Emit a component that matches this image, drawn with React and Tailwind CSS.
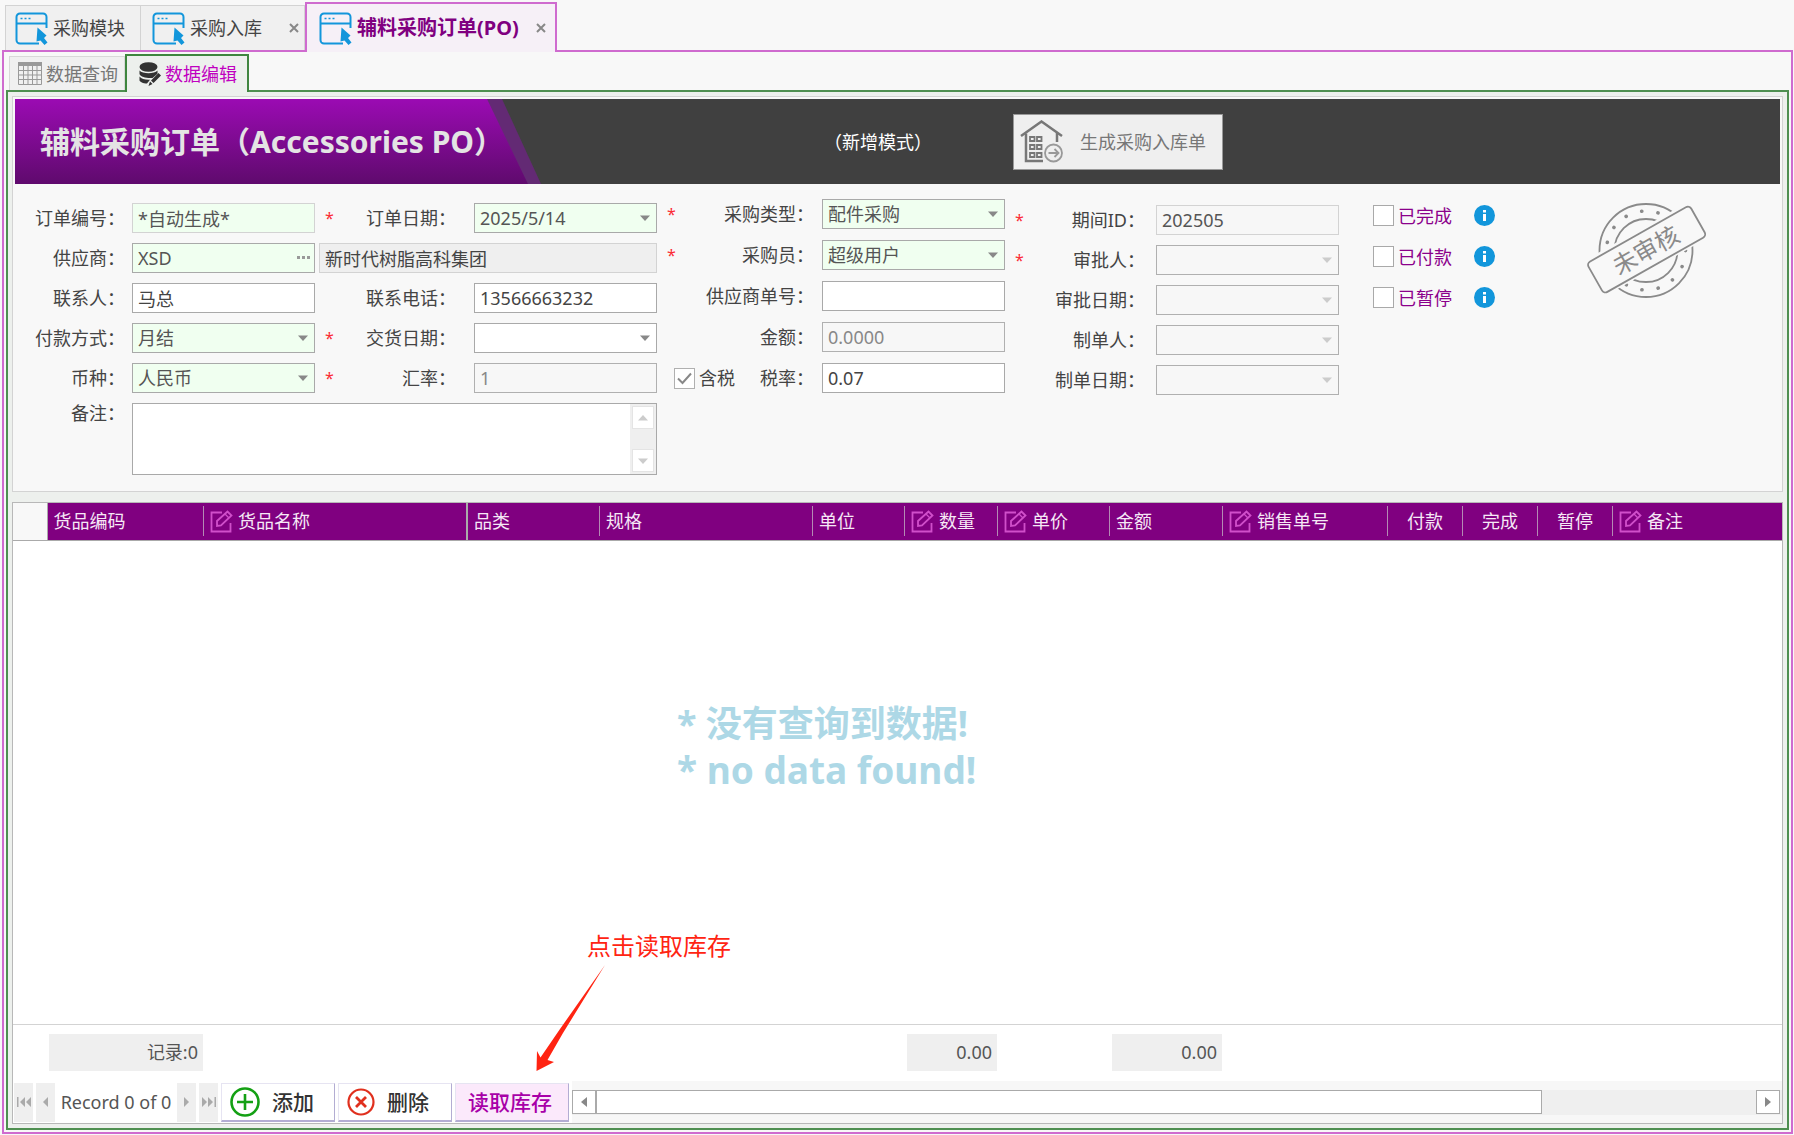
import { useState } from "react";

const columns = [
  { title: "货品编码", width: "w-[157px]" },
  { title: "货品名称", width: "w-[263px]", edit: true, fixed: true },
  { title: "品类", width: "w-[133px]" },
  { title: "规格", width: "w-[213px]" },
  { title: "单位", width: "w-[92px]" },
  { title: "数量", width: "w-[93px]", edit: true, total: "0.00" },
  { title: "单价", width: "w-[112px]", edit: true },
  { title: "金额", width: "w-[113px]", total: "0.00" },
  { title: "销售单号", width: "w-[165px]", edit: true },
  { title: "付款", width: "w-[75px]", center: true },
  { title: "完成", width: "w-[75px]", center: true },
  { title: "暂停", width: "w-[75px]", center: true },
  { title: "备注", width: "", edit: true },
];

const tones = {
  required: "bg-[#f0fff0] border-[#a9a9a9] text-[#555]",
  auto: "bg-[#f0fff0] border-[#d3d3d3] text-[#555]",
  normal: "bg-white border-[#a9a9a9] text-[#444]",
  disabled: "bg-[#f7f7f7] border-[#b0b0b0] text-[#888]",
  readonly: "bg-[#f7f7f7] border-[#d3d3d3] text-[#555]",
  gray: "bg-[#efefef] border-[#d3d3d3] text-[#444]",
};

/* ---------- icons ---------- */

function WindowIcon() {
  return (
    <svg className="w-[33px] h-[33px] shrink-0" viewBox="0 0 33 33" fill="none" stroke="#1296db" strokeWidth="2">
      <path d="M24 31.500H5A3.500 3.500 0 0 1 1.500 28V5A3.500 3.500 0 0 1 5 1.500h23A3.500 3.500 0 0 1 31.500 5v11" />
      <path d="M1.500 11.500h30" />
      <path d="M5.500 6.500h2M9.500 6.500h2M13.500 6.500h2" strokeWidth="1.600" />
      <path d="M22.500 15.500l9 8-2.500 2.500 3.500 4.500-3 2.500-4-4.500-4 1z" fill="#1296db" stroke="none" />
    </svg>
  );
}

function SheetIcon() {
  return (
    <svg className="w-6 h-[23px] shrink-0" viewBox="0 0 24 23" fill="none" stroke="#999">
      <path d="M0 0h24v4H0z" fill="#999" stroke="none" />
      <path d="M.5 .5h23v22H.5zM5.500 4v18M10 4v18M14.500 4v18M19 4v18M0 8.500h24M0 13h24M0 17.500h24" />
    </svg>
  );
}

function DatabaseIcon() {
  return (
    <svg className="w-[22px] h-6 shrink-0" viewBox="0 0 22 24" fill="#333">
      <ellipse cx="9.500" cy="5" rx="9" ry="4.800" />
      <path d="M.5 8.500c3 3.500 15 3.500 18 0v3.200l-5 4.300C8 16.500 1.500 15 .5 12z" />
      <path d="M.5 14.500c2 2.500 6 3.500 10.500 3.200l-3 3.800C4 21.500 1 20 .5 18.500z" />
      <path d="M19.500 11l2.500 2.500-7.500 7.500-2.500-2.500zM11 19.500l2.500 2.500-4 2z" />
    </svg>
  );
}

function HouseIcon() {
  return (
    <svg className="w-[43px] h-[43px] shrink-0" viewBox="0 0 43 43" fill="none" stroke="#777" strokeWidth="1.800">
      <path d="M1 16L21.500 1.500 42 16" strokeWidth="2.500" />
      <path d="M6 13.500V41h17" strokeWidth="2.500" />
      <path d="M37 13v9" strokeWidth="2.500" />
      <path d="M10 17h4.500v4H10zM17 17h4.500v4H17zM10 25h4.500v4H10zM17 25h4.500v4H17zM10 33h4.500v4H10zM17 33h4.500v4H17z" />
      <circle cx="33.500" cy="33" r="8.500" stroke="#999" />
      <path d="M28.500 33h9M34.500 29l4 4-4 4" stroke="#999" />
    </svg>
  );
}

function EditIcon() {
  return (
    <svg className="w-[23px] h-[23px] shrink-0" viewBox="0 0 23 23" fill="none" stroke="#d04fca" strokeWidth="1.800">
      <path d="M12 2.500H1.500v19h19V13" />
      <path d="M7 16v-5L17.500 1.500l4 4L11 15.500z" />
      <path d="M15 4l4 4" strokeWidth="1.200" />
    </svg>
  );
}

function Stamp() {
  return (
    <svg className="w-[122px] h-[96px]" viewBox="0 0 122 96" fill="none" stroke="#8a8a8a" strokeWidth="1.800">
      <circle cx="60" cy="47.500" r="46.500" />
      <circle cx="60" cy="47.500" r="31.500" />
      <circle cx="60" cy="47.500" r="39.500" strokeWidth="3.600" strokeLinecap="round" strokeDasharray="0.1 16.400" />
      <g transform="rotate(-29.500 60 47.500)">
        <path d="M0 26h122v41H0z" fill="#f8f8f8" stroke="none" />
        <rect x="2" y="29.500" width="118" height="35" rx="4" fill="#f8f8f8" />
        <text x="60" y="56" textAnchor="middle" fontSize="24" fill="#8a8a8a" stroke="none">
          未审核
        </text>
      </g>
    </svg>
  );
}

function InfoIcon() {
  return (
    <svg className="w-[21px] h-[21px]" viewBox="0 0 21 21">
      <circle cx="10.500" cy="10.500" r="10.500" fill="#1296db" />
      <path d="M9 5h3v2.500H9zM9 9h3v7H9z" fill="#fff" />
    </svg>
  );
}

function CloseIcon() {
  return (
    <svg className="h-[10px] w-[10px]" viewBox="0 0 10 10" stroke="#888" strokeWidth="2">
      <path d="M1 1l8 8M9 1L1 9" />
    </svg>
  );
}

function Triangle({ dir = "down", className = "" }) {
  const d = {
    down: "M0 2.500h10L5 8z",
    up: "M0 7.500h10L5 2z",
    left: "M8 0v10L2 5z",
    right: "M2 0v10l6-5z",
  };
  return (
    <svg className={`w-[10px] h-[10px] ${className}`} viewBox="0 0 10 10" fill="currentColor">
      <path d={d[dir]} />
    </svg>
  );
}

/* ---------- form parts ---------- */

// The star marks the field on the left of the label
function LabelCell({ htmlFor, children, star, className = "" }) {
  return (
    <div className={`flex items-center pl-[10px] ${className}`}>
      {star && <span className="text-base text-red-500">*</span>}
      <label htmlFor={htmlFor} className="ml-auto whitespace-nowrap">
        {children}：
      </label>
    </div>
  );
}

function TextBox({ id, tone = "normal", className = "", ...props }) {
  return (
    <input
      id={id}
      type="text"
      className={`h-[30px] w-full min-w-0 border px-[5px] outline-none ${tones[tone]} ${className}`}
      {...props}
    />
  );
}

function Combo({ id, value, tone = "required", disabled }) {
  return (
    <div className="relative">
      <select
        id={id}
        disabled={disabled}
        defaultValue={value}
        className={`h-[30px] w-full appearance-none border px-[5px] opacity-100 outline-none ${tones[tone]}`}
      >
        <option value={value}>{value}</option>
      </select>
      <Triangle
        className={`pointer-events-none absolute right-[7px] top-[10px] ${disabled ? "text-[#ccc]" : "text-[#888]"}`}
      />
    </div>
  );
}

function DateBox({ id, value = "", tone = "normal", disabled }) {
  return (
    <div className="relative">
      <TextBox id={id} tone={tone} defaultValue={value} disabled={disabled} />
      <button
        type="button"
        aria-label="选择日期"
        disabled={disabled}
        className={`absolute right-[7px] top-[10px] ${disabled ? "text-[#ccc]" : "text-[#888]"}`}
      >
        <Triangle />
      </button>
    </div>
  );
}

function StatusCheck({ id, children }) {
  return (
    <div className="flex h-[21px] items-center">
      <input id={id} type="checkbox" className="h-[21px] w-[21px] appearance-none border border-[#a9a9a9] bg-white checked:bg-[#8b008b]" />
      <label htmlFor={id} className="w-[80px] pl-1 text-[#8b008b]">
        {children}
      </label>
      <InfoIcon />
    </div>
  );
}

function OrderForm() {
  return (
    <form className="flex items-start pb-[14px] pt-[15px] text-[#444]">
      <div className="mt-1 grid grid-cols-[117px_183px_159px_183px] gap-y-[10px]">
        <LabelCell htmlFor="no" className="pr-[7px]">订单编号</LabelCell>
        <TextBox id="no" tone="auto" defaultValue="*自动生成*" readOnly />
        <LabelCell htmlFor="date" star className="pr-[18px]">订单日期</LabelCell>
        <DateBox id="date" tone="required" value="2025/5/14" />

        <LabelCell htmlFor="supplier" className="pr-[7px]">供应商</LabelCell>
        <div className="relative">
          <TextBox id="supplier" tone="required" defaultValue="XSD" />
          <button type="button" aria-label="选择供应商" className="absolute right-[5px] top-[13px] flex gap-[2px]">
            <i className="h-[3px] w-[3px] bg-[#999]" />
            <i className="h-[3px] w-[3px] bg-[#999]" />
            <i className="h-[3px] w-[3px] bg-[#999]" />
          </button>
        </div>
        <div className="col-span-2 pl-1">
          <TextBox tone="gray" aria-label="供应商名称" defaultValue="新时代树脂高科集团" readOnly />
        </div>

        <LabelCell htmlFor="contact" className="pr-[7px]">联系人</LabelCell>
        <TextBox id="contact" defaultValue="马总" />
        <LabelCell htmlFor="phone" className="pr-[18px]">联系电话</LabelCell>
        <TextBox id="phone" defaultValue="13566663232" />

        <LabelCell htmlFor="pay" className="pr-[7px]">付款方式</LabelCell>
        <Combo id="pay" value="月结" />
        <LabelCell htmlFor="delivery" star className="pr-[18px]">交货日期</LabelCell>
        <DateBox id="delivery" />

        <LabelCell htmlFor="currency" className="pr-[7px]">币种</LabelCell>
        <Combo id="currency" value="人民币" />
        <LabelCell htmlFor="rate" star className="pr-[18px]">汇率</LabelCell>
        <TextBox id="rate" tone="disabled" defaultValue="1" disabled />

        <LabelCell htmlFor="remark" className="h-5 pr-[7px]">备注</LabelCell>
        <div className="col-span-3 flex h-[72px] border border-[#a9a9a9] bg-white">
          <textarea id="remark" className="flex-1 resize-none px-[5px] outline-none" />
          <div className="flex w-[26px] flex-col justify-between bg-[#efefef] p-[2px] text-[#ccc]">
            <button type="button" aria-label="向上" className="flex h-[23px] items-center justify-center border border-[#e4e4e4] bg-white">
              <Triangle dir="up" />
            </button>
            <button type="button" aria-label="向下" className="flex h-[23px] items-center justify-center border border-[#e4e4e4] bg-white">
              <Triangle />
            </button>
          </div>
        </div>
      </div>

      <div className="grid grid-cols-[165px_183px] gap-y-[11px]">
        <LabelCell htmlFor="type" star className="pr-[8px]">采购类型</LabelCell>
        <Combo id="type" value="配件采购" />
        <LabelCell htmlFor="buyer" star className="pr-[8px]">采购员</LabelCell>
        <Combo id="buyer" value="超级用户" />
        <LabelCell htmlFor="supplierNo" className="pr-[8px]">供应商单号</LabelCell>
        <TextBox id="supplierNo" />
        <LabelCell htmlFor="amount" className="pr-[8px]">金额</LabelCell>
        <TextBox id="amount" tone="disabled" defaultValue="0.0000" disabled />
        <div className="flex items-center pl-[17px] pr-[8px]">
          <span className="relative h-[21px]">
            <input
              id="tax"
              type="checkbox"
              defaultChecked
              className="peer block h-[21px] w-[21px] appearance-none border border-[#b0b0b0] bg-white"
            />
            <svg
              className="pointer-events-none absolute left-[3px] top-[4px] hidden h-[13px] w-[15px] peer-checked:block"
              viewBox="0 0 15 13"
              fill="none"
              stroke="#888"
              strokeWidth="2"
            >
              <path d="M1 6.500l4.500 4.500L14 1.500" />
            </svg>
          </span>
          <label htmlFor="tax" className="pl-1">含税</label>
          <label htmlFor="taxRate" className="ml-auto whitespace-nowrap">税率：</label>
        </div>
        <TextBox id="taxRate" defaultValue="0.07" />
      </div>

      <div className="mt-[6px] grid grid-cols-[151px_183px] gap-y-[10px]">
        <LabelCell htmlFor="period" star className="pr-[11px]">期间ID</LabelCell>
        <TextBox id="period" tone="readonly" defaultValue="202505" readOnly />
        <LabelCell htmlFor="auditor" star className="pr-[11px]">审批人</LabelCell>
        <Combo id="auditor" value="" tone="disabled" disabled />
        <LabelCell htmlFor="auditDate" className="pr-[11px]">审批日期</LabelCell>
        <DateBox id="auditDate" tone="disabled" disabled />
        <LabelCell htmlFor="maker" className="pr-[11px]">制单人</LabelCell>
        <Combo id="maker" value="" tone="disabled" disabled />
        <LabelCell htmlFor="makeDate" className="pr-[11px]">制单日期</LabelCell>
        <DateBox id="makeDate" tone="disabled" disabled />
      </div>

      <div className="ml-[34px] mt-[6px] flex flex-col gap-5">
        <StatusCheck id="done">已完成</StatusCheck>
        <StatusCheck id="paid">已付款</StatusCheck>
        <StatusCheck id="paused">已暂停</StatusCheck>
      </div>

      <div className="ml-auto mr-[72px] mt-1">
        <Stamp />
      </div>
    </form>
  );
}

function Banner() {
  return (
    <header className="relative flex h-[85px] items-center bg-[#404040] text-white">
      <svg className="absolute left-0 top-0 h-[85px] w-[530px]" viewBox="0 0 530 85">
        <defs>
          <linearGradient id="purple" x1="0" y1="0" x2="0" y2="1">
            <stop offset="0" stopColor="#9b0bb3" />
            <stop offset="1" stopColor="#5f0a6d" />
          </linearGradient>
        </defs>
        <path d="M470 0h17l39 85h-20z" fill="#632a74" />
        <path d="M0 0h472l41 85H0z" fill="url(#purple)" />
      </svg>
      <h1 className="relative w-[809px] whitespace-nowrap pl-[25px] text-[30px] font-bold leading-10 text-[#e4e4e4]">
        辅料采购订单（Accessories PO）
      </h1>
      <span>（新增模式）</span>
      <button
        type="button"
        className="ml-[81px] flex h-14 w-[210px] items-center border border-[#999] bg-[#efefef] pl-[6px] text-[#777]"
      >
        <HouseIcon />
        <span className="pl-[17px]">生成采购入库单</span>
      </button>
    </header>
  );
}

/* ---------- detail grid ---------- */

function DetailTable() {
  return (
    <table className="w-full flex-1 table-fixed border-collapse bg-white">
      <thead>
        <tr className="h-[37px] border-b border-[#aaa] bg-[#800080] text-[#f6e8f6]">
          <th className="w-[34px] border-r border-[#aaa] bg-[#f8f8f8]" aria-label="行" />
          {columns.map((col, i) => (
            <th key={col.title} className={`p-0 font-normal ${col.width} ${col.fixed ? "border-r-2 border-[#aaa]" : ""}`}>
              <div
                className={`flex h-[30px] items-center gap-[5px] ${col.center ? "justify-center" : "pl-[6px]"} ${
                  col.fixed || i === columns.length - 1 ? "" : "border-r border-[#b48ab4]"
                }`}
              >
                {col.edit && <EditIcon />}
                {col.title}
              </div>
            </th>
          ))}
        </tr>
      </thead>
      <tbody>
        <tr>
          <td colSpan={columns.length + 1} className="p-0 align-top">
            <div className="pl-[664px] pt-[160px] text-4xl font-bold leading-[46px] text-[#add8e6]">
              <p>* 没有查询到数据!</p>
              <p className="text-[37px]">* no data found!</p>
            </div>
          </td>
        </tr>
      </tbody>
      <tfoot>
        <tr className="h-[57px] border-t border-[#d3d3d3] text-[#555]">
          <td />
          {columns.map((col, i) => (
            <td key={col.title} className="py-0 pl-[2px] pr-px">
              {i === 0 && <div className="bg-[#efefef] pr-[5px] text-right leading-[37px]">记录:0</div>}
              {col.total && <div className="bg-[#efefef] pr-[5px] text-right leading-[37px]">{col.total}</div>}
            </td>
          ))}
        </tr>
      </tfoot>
    </table>
  );
}

function NavButton({ label, children }) {
  return (
    <button type="button" aria-label={label} className="flex h-[39px] w-[19px] items-center justify-center bg-[#efefef] text-[#aaa]">
      {children}
    </button>
  );
}

function ToolButton({ children, className = "bg-white text-[#333]" }) {
  return (
    <button
      type="button"
      className={`mr-[3px] flex h-[39px] w-[114px] items-center border border-b-2 border-[#e6e4f2] border-b-[#b3add3] border-r-[#b3add3] text-[21px] font-medium ${className}`}
    >
      {children}
    </button>
  );
}

function Pager() {
  return (
    <div className="flex h-[42px] items-center bg-[#f7f7f7]">
      <div className="flex h-full items-center gap-[3px] bg-white pl-px">
        <NavButton label="第一条">
          <svg className="h-[10px] w-[14px]" viewBox="0 0 14 10" fill="currentColor">
            <path d="M0 0h1.500v10H0zM8 0v10L3 5zM14 0v10L9 5z" />
          </svg>
        </NavButton>
        <NavButton label="上一条">
          <svg className="h-[10px] w-[5px]" viewBox="0 0 5 10" fill="currentColor">
            <path d="M5 0v10L0 5z" />
          </svg>
        </NavButton>
        <span className="w-[116px] text-center text-[#555]">Record 0 of 0</span>
        <NavButton label="下一条">
          <svg className="h-[10px] w-[5px]" viewBox="0 0 5 10" fill="currentColor">
            <path d="M0 0v10l5-5z" />
          </svg>
        </NavButton>
        <NavButton label="最后一条">
          <svg className="h-[10px] w-[14px]" viewBox="0 0 14 10" fill="currentColor">
            <path d="M14 0h-1.500v10H14zM6 0v10l5-5zM0 0v10l5-5z" />
          </svg>
        </NavButton>
        <div className="flex">
          <ToolButton>
            <svg className="ml-2 mr-3 h-[30px] w-[30px]" viewBox="0 0 30 30" fill="none" stroke="#14a014" strokeWidth="2.600">
              <circle cx="15" cy="15" r="13.500" />
              <path d="M15 7v16M7 15h16" />
            </svg>
            添加
          </ToolButton>
          <ToolButton>
            <svg className="ml-2 mr-3 h-7 w-7" viewBox="0 0 28 28" fill="none" stroke="#e0301e" strokeWidth="2.200">
              <circle cx="14" cy="14" r="12.500" />
              <path d="M9 9l10 10M19 9L9 19" strokeWidth="2.800" />
            </svg>
            删除
          </ToolButton>
          <ToolButton className="bg-[#fbe9fb] pl-3 text-[#a800a8]">读取库存</ToolButton>
        </div>
      </div>
      <div className="flex h-[25px] flex-1 items-center bg-[#efefef] pr-[2px] text-[#888]">
        <button type="button" aria-label="向左" className="flex h-6 w-6 items-center justify-center border border-[#aaa] bg-white">
          <Triangle dir="left" />
        </button>
        <div className="flex h-6 flex-1">
          <div className="w-[946px] border border-[#aaa] bg-white" />
        </div>
        <button type="button" aria-label="向右" className="flex h-6 w-6 items-center justify-center border border-[#aaa] bg-white">
          <Triangle dir="right" />
        </button>
      </div>
    </div>
  );
}

function ClickHint() {
  return (
    <div className="pointer-events-none absolute bottom-[57px] left-[528px] w-[240px] text-[#ff2412]">
      <p className="pl-[51px] text-2xl leading-9">点击读取库存</p>
      <svg className="h-[107px] w-[72px]" viewBox="0 0 72 107" fill="currentColor">
        <path d="M69 1L24 65 4.500 93.500 1 87 0.500 107 18 98 11.500 96 27 69z" />
      </svg>
    </div>
  );
}

export default function App() {
  const [tab, setTab] = useState("edit");

  const subTab = (name) =>
    tab === name
      ? "relative z-10 -mb-[2px] h-[38px] border-2 border-b-0 border-[#3f853f] bg-[#edf0ed] text-[#c000c0]"
      : "h-[34px] border border-b-0 border-[#d8d8d8] bg-[#f0f0f0] text-[#777]";

  return (
    <div className="flex min-h-screen flex-col bg-[#f8f8f8] pl-[2px] pr-px pb-px font-['Noto_Sans','Noto_Sans_CJK_SC',sans-serif] text-[18px] leading-6">
      <nav className="flex h-[50px] items-end pl-[3px] text-[#444]">
        <a href="#module" className="flex h-[45px] w-[136px] items-center gap-[5px] border border-b-0 border-[#d3d3d3] bg-[#f0f0f0] pl-[9px]">
          <WindowIcon />
          采购模块
        </a>
        <div className="flex h-[45px] w-[164px] items-center border border-b-0 border-l-0 border-[#d3d3d3] bg-[#f0f0f0] pl-[11px]">
          <a href="#stock-in" className="flex flex-1 items-center gap-[5px]">
            <WindowIcon />
            采购入库
          </a>
          <button type="button" aria-label="关闭" className="pr-[5px]">
            <CloseIcon />
          </button>
        </div>
        <div className="relative z-10 -mb-[2px] flex h-[50px] w-[252px] items-center border-2 border-b-0 border-[#cf6bcf] bg-[#f6f0f7] pl-3">
          <a href="#po" className="flex flex-1 items-center gap-[5px] whitespace-nowrap text-[20px] font-bold text-[#800080]">
            <WindowIcon />
            辅料采购订单(PO)
          </a>
          <button type="button" aria-label="关闭" className="pr-[9px]">
            <CloseIcon />
          </button>
        </div>
      </nav>

      <div className="flex flex-1 flex-col border-2 border-[#cf6bcf] px-[2px] pb-[2px] pt-[2px]">
        <div className="flex items-end pl-[3px]">
          <button type="button" onClick={() => setTab("query")} className={`flex w-[116px] items-center gap-1 pl-2 ${subTab("query")}`}>
            <SheetIcon />
            数据查询
          </button>
          <button type="button" onClick={() => setTab("edit")} className={`flex w-[124px] items-center gap-1 pl-3 ${subTab("edit")}`}>
            <DatabaseIcon />
            数据编辑
          </button>
        </div>

        <main className="relative flex flex-1 flex-col border-2 border-[#4f8f51] bg-[#edf0ed] p-1">
          <section className="border border-[#d3d3d3] bg-[#f8f8f8] p-[2px]">
            <Banner />
            <OrderForm />
          </section>
          <section className="mt-[10px] flex flex-1 flex-col border border-[#b8b8b8] bg-white">
            <DetailTable />
            <Pager />
          </section>
          <ClickHint />
        </main>
      </div>
    </div>
  );
}
